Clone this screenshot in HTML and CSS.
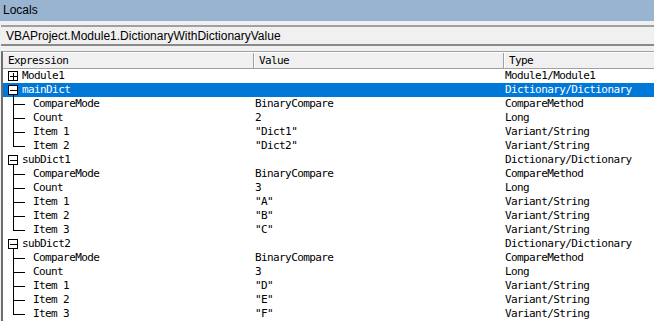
FILE: index.html
```html
<!DOCTYPE html>
<html>
<head>
    <link rel="stylesheet" href="styles.css">
</head>
<body>
    <div class="title">Locals</div>
    <div class="context">VBAProject.Module1.DictionaryWithDictionaryValue</div>

    <div class="grid">
        <div class="head">
            <div class="hcell">Expression</div>
            <div class="hcell">Value</div>
            <div class="hcell">Type</div>
        </div>
        <div id="rows"></div>
    </div>

    <script>
        // [expression, value, type, state, selected]
        // state: "plus" / "minus" for parents, "mid" / "last" for children
        const data = [
            ['Module1', '', 'Module1/Module1', 'plus'],
            ['mainDict', '', 'Dictionary/Dictionary', 'minus', true],
            ['CompareMode', 'BinaryCompare', 'CompareMethod', 'mid'],
            ['Count', '2', 'Long', 'mid'],
            ['Item 1', '"Dict1"', 'Variant/String', 'mid'],
            ['Item 2', '"Dict2"', 'Variant/String', 'last'],
            ['subDict1', '', 'Dictionary/Dictionary', 'minus'],
            ['CompareMode', 'BinaryCompare', 'CompareMethod', 'mid'],
            ['Count', '3', 'Long', 'mid'],
            ['Item 1', '"A"', 'Variant/String', 'mid'],
            ['Item 2', '"B"', 'Variant/String', 'mid'],
            ['Item 3', '"C"', 'Variant/String', 'last'],
            ['subDict2', '', 'Dictionary/Dictionary', 'minus'],
            ['CompareMode', 'BinaryCompare', 'CompareMethod', 'mid'],
            ['Count', '3', 'Long', 'mid'],
            ['Item 1', '"D"', 'Variant/String', 'mid'],
            ['Item 2', '"E"', 'Variant/String', 'mid'],
            ['Item 3', '"F"', 'Variant/String', 'last']
        ];

        const icons = {
            plus: '<svg width="19" height="14"><rect x="5.5" y="2.5" width="9" height="9" fill="#fff" stroke="#000"/><path d="M7 7.5h7M10.5 4v7" stroke="#000"/></svg>',
            minus: '<svg width="19" height="14"><rect x="5.5" y="2.5" width="9" height="9" fill="#fff" stroke="#000"/><path d="M7 7.5h7M10.5 12v2" stroke="#000"/></svg>',
            mid: '<svg width="30" height="14"><path d="M10.5 0v14M10 7.5h12" stroke="#000"/></svg>',
            last: '<svg width="30" height="14"><path d="M10.5 0v8M10 7.5h12" stroke="#000"/></svg>'
        };

        const rows = document.getElementById('rows');
        data.forEach(([expr, value, type, state, selected]) => {
            const row = document.createElement('div');
            row.className = 'row' + (selected ? ' selected' : '');
            row.innerHTML =
                `<div class="cell expr">${icons[state]}<span>${expr}</span></div>` +
                `<div class="cell">${value}</div>` +
                `<div class="cell">${type}</div>`;
            rows.appendChild(row);
        });
    </script>
</body>
</html>
```

FILE: styles.css
```css
body {
    margin: 0;
    background: #f0f0f0;
    overflow: hidden;
    height: 321px;
}

.title {
    height: 21px;
    line-height: 20px;
    padding-left: 3px;
    background: #99b4d1;
    color: #000;
    font-family: "Liberation Sans", sans-serif;
    font-size: 12px;
}

.context {
    margin: 4px 0 0 1px;
    height: 17px;
    line-height: 18px;
    padding-left: 5px;
    border-top: 2px solid #a0a0a0;
    border-bottom: 2px solid #8a8a8a;
    font-family: "Liberation Sans", sans-serif;
    font-size: 12px;
    color: #000;
}

.grid {
    margin: 5px 0 0 1px;
    border-top: 1px solid #a0a0a0;
    border-left: 2px solid #6d6d6d;
    background: #fff;
    font-family: "DejaVu Sans Mono", monospace;
    font-size: 11px;
    letter-spacing: -0.6px;
    color: #000;
}

.head,
.row {
    display: grid;
    grid-template-columns: 250px 250px 1fr;
}

.head {
    height: 15px;
    border-bottom: 1px solid #a0a0a0;
    background: #f0f0f0;
    border-top: 1px solid #fff;
}

.hcell {
    line-height: 15px;
    padding-left: 5px;
    white-space: nowrap;
}

.hcell + .hcell {
    border-left: 1px solid #a0a0a0;
    box-shadow: inset 1px 0 0 #fff;
}

.row {
    height: 14px;
    line-height: 14px;
}

.row.selected {
    background: #0078d7;
    color: #fff;
}

.cell {
    padding-left: 2px;
    white-space: nowrap;
}

.cell.expr {
    display: flex;
    align-items: center;
    padding-left: 0;
}

.cell.expr svg {
    flex: none;
    display: block;
}
```
